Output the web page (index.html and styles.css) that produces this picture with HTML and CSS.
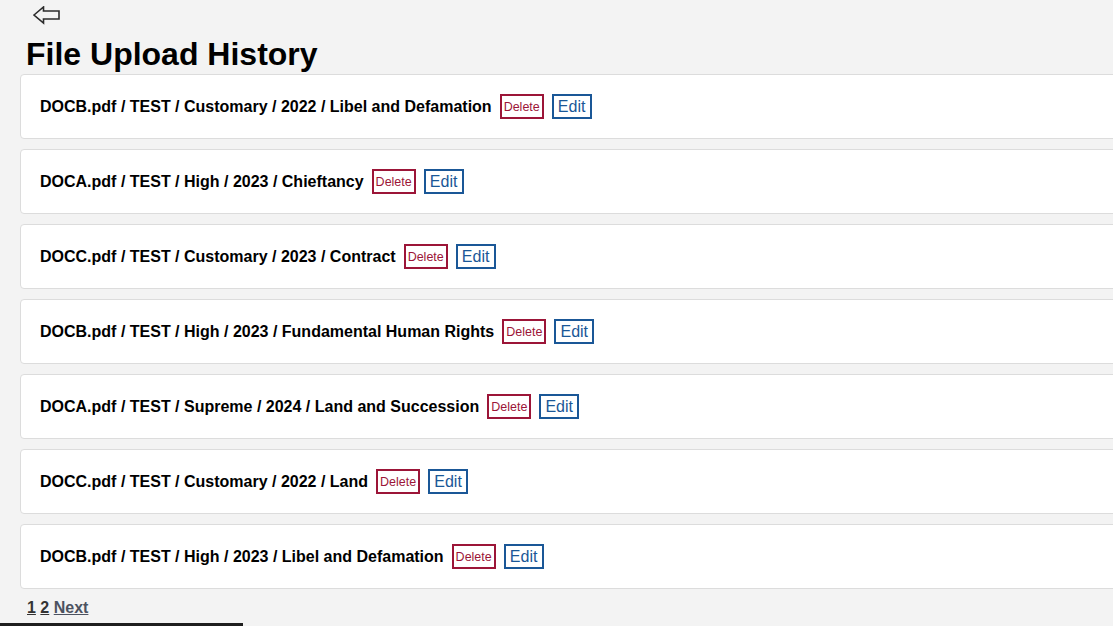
FILE: index.html
```html
<!DOCTYPE html>
<html lang="en">
<head>
<meta charset="utf-8">
<title>File Upload History</title>
<link rel="stylesheet" href="styles.css">
</head>
<body>
<div class="page">
  <div class="back">
    <svg class="back-icon" width="28" height="19" viewBox="0 0 28 19" aria-label="Back">
      <polygon points="1,9 10.5,1 10.5,5 26,5 26,13 10.5,13 10.5,17" fill="#f3f3f3" stroke="#2b2b2b" stroke-width="1.6" stroke-linejoin="miter"/>
    </svg>
  </div>
  <h1 class="title">File Upload History</h1>
  <div class="list">
    <div class="card"><span class="name">DOCB.pdf / TEST / Customary / 2022 / Libel and Defamation</span><button class="btn-delete">Delete</button><button class="btn-edit">Edit</button></div>
    <div class="card"><span class="name">DOCA.pdf / TEST / High / 2023 / Chieftancy</span><button class="btn-delete">Delete</button><button class="btn-edit">Edit</button></div>
    <div class="card"><span class="name">DOCC.pdf / TEST / Customary / 2023 / Contract</span><button class="btn-delete">Delete</button><button class="btn-edit">Edit</button></div>
    <div class="card"><span class="name">DOCB.pdf / TEST / High / 2023 / Fundamental Human Rights</span><button class="btn-delete">Delete</button><button class="btn-edit">Edit</button></div>
    <div class="card"><span class="name">DOCA.pdf / TEST / Supreme / 2024 / Land and Succession</span><button class="btn-delete">Delete</button><button class="btn-edit">Edit</button></div>
    <div class="card"><span class="name">DOCC.pdf / TEST / Customary / 2022 / Land</span><button class="btn-delete">Delete</button><button class="btn-edit">Edit</button></div>
    <div class="card"><span class="name">DOCB.pdf / TEST / High / 2023 / Libel and Defamation</span><button class="btn-delete">Delete</button><button class="btn-edit">Edit</button></div>
  </div>
  <div class="pager"><a class="pg" href="#">1</a> <a class="pg" href="#">2</a> <a class="pg next" href="#">Next</a></div>
</div>
<div class="hscroll"></div>
</body>
</html>
```

FILE: styles.css
```css
html, body {
  margin: 0;
  padding: 0;
  background: #f3f3f3;
  overflow: hidden;
  font-family: "Liberation Sans", Arial, sans-serif;
  color: #000;
}
.page {
  padding-left: 20px;
  width: 1300px;
}
.back {
  padding-top: 6px;
  padding-left: 13px;
  height: 19px;
}
.back-icon {
  display: block;
}
.title {
  margin: 11px 0 2px 6px;
  font-size: 32px;
  line-height: 36px;
  font-weight: bold;
}
.list {
  display: flex;
  flex-direction: column;
  gap: 10px;
}
.card {
  box-sizing: border-box;
  height: 65px;
  background: #fff;
  border: 1px solid #dcdcdc;
  border-radius: 4px;
  display: flex;
  align-items: center;
  padding-left: 19px;
}
.name {
  font-size: 16px;
  font-weight: bold;
}
.btn-delete, .btn-edit {
  box-sizing: border-box;
  height: 25px;
  background: #fff;
  font-family: "Liberation Sans", Arial, sans-serif;
  margin: 0 0 0 8px;
  cursor: pointer;
  border-radius: 0;
}
.btn-delete {
  border: 2px solid #9c1538;
  color: #9c1538;
  font-size: 12.5px;
  padding: 0 2px;
  width: 44px;
}
.btn-edit {
  border: 2px solid #1a5797;
  color: #1a5797;
  font-size: 16px;
  padding: 0 4px;
  width: 40px;
}
.pager {
  margin: 10px 0 0 7px;
  font-size: 16px;
  font-weight: bold;
  line-height: 18px;
}
.pg {
  color: #333;
  text-decoration: underline;
}
.next {
  color: #4c5260;
}
.hscroll {
  position: fixed;
  left: 0;
  bottom: 0;
  width: 243px;
  height: 3px;
  background: #1e1e1e;
}
```
